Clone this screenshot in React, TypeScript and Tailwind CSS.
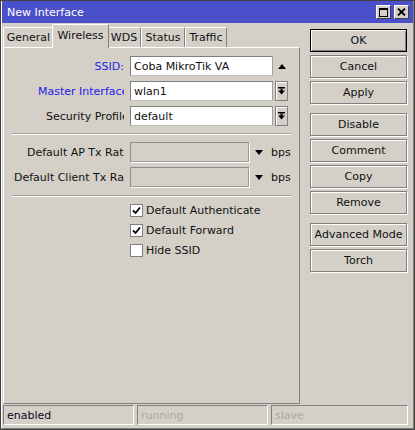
import React from "react";

const Btn = ({ label, def = false }: { label: string; def?: boolean }) => (
  <div
    className={
      "h-[23px] flex items-center justify-center text-[#101010] " +
      (def
        ? "border border-black shadow-[inset_1px_1px_0_#ffffff,inset_-1px_-1px_0_#808080]"
        : "border border-[#808080] shadow-[inset_1px_1px_0_#ffffff,1px_1px_0_#ffffff]")
    }
  >
    {label}
  </div>
);

const UpTri = () => (
  <svg width="8" height="5" viewBox="0 0 8 5">
    <polygon points="0,5 8,5 4,0" fill="#000" />
  </svg>
);

const DownTri = () => (
  <svg width="8" height="5" viewBox="0 0 8 5">
    <polygon points="0,0 8,0 4,5" fill="#000" />
  </svg>
);

const DropBtn = () => (
  <div className="ml-[2px] w-[13px] h-[20px] flex items-center justify-center border border-[#808080] shadow-[inset_1px_1px_0_#ffffff]">
    <svg width="7" height="8" viewBox="0 0 7 8">
      <rect x="0" y="0" width="7" height="1.5" fill="#000" />
      <rect x="2.5" y="1.5" width="2" height="2.5" fill="#000" />
      <polygon points="0,3.5 7,3.5 3.5,7.5" fill="#000" />
    </svg>
  </div>
);

const Label = ({ text, pl, blue = false, right = false }: { text: string; pl?: string; blue?: boolean; right?: boolean }) => (
  <div
    className={
      "w-[120px] overflow-hidden whitespace-nowrap " +
      (right ? "text-right " : "text-left ") +
      (pl ?? "") +
      (blue ? " text-[#2323e6]" : " text-[#101010]")
    }
  >
    {text}
  </div>
);

const Input = ({ value }: { value: string }) => (
  <div className="ml-[6px] w-[143px] h-[20px] bg-white border border-t-[#808080] border-l-[#808080] border-r-[#a0a0a0] border-b-[#c0c0c0] flex items-center pl-[3px] text-[#101010]">
    {value}
  </div>
);

const Sep = ({ mt }: { mt: string }) => (
  <div className={"mx-[8px] " + mt}>
    <div className="h-px bg-[#a0a0a0]" />
    <div className="h-px bg-white" />
  </div>
);

const Check = ({ label, checked }: { label: string; checked: boolean }) => (
  <div className="h-[20px] flex items-center ml-[126px]">
    <div className="w-[13px] h-[13px] bg-white border border-[#808080] flex items-center justify-center">
      {checked && (
        <svg width="9" height="9" viewBox="0 0 9 9">
          <polyline points="1,4.5 3.5,7 8,1.5" fill="none" stroke="#000" strokeWidth="1.8" />
        </svg>
      )}
    </div>
    <span className="ml-[3px] text-[#101010]">{label}</span>
  </div>
);

export default function App() {
  const tabs = [
    { name: "General", w: "w-[51px]" },
    { name: "Wireless", w: "w-[57px]", sel: true },
    { name: "WDS", w: "w-[34px]" },
    { name: "Status", w: "w-[44px]" },
    { name: "Traffic", w: "w-[42px]" },
  ];
  return (
    <div className="w-[415px] h-[430px] bg-[#d4d0c8] border border-[#404040] font-['DejaVu_Sans',sans-serif] text-[11px] leading-none overflow-hidden">
      <div className="w-full h-full flex flex-col border border-t-white border-l-white border-r-[#808080] border-b-[#808080]">
        {/* Title bar */}
        <div className="h-[22px] -mt-px bg-[#4a4fca] flex items-center justify-between pl-[5px] pr-[4px]">
          <span className="text-white">New Interface</span>
          <div className="flex gap-[3px]">
            <div className="w-[15px] h-[14px] bg-[#d4d0c8] border border-t-white border-l-white border-r-[#404040] border-b-[#404040] flex items-center justify-center">
              <svg width="9" height="9" viewBox="0 0 9 9">
                <rect x="0.5" y="0.5" width="8" height="8" fill="none" stroke="#000" strokeWidth="1" />
                <rect x="0" y="0" width="9" height="2" fill="#000" />
              </svg>
            </div>
            <div className="w-[15px] h-[14px] bg-[#d4d0c8] border border-t-white border-l-white border-r-[#404040] border-b-[#404040] flex items-center justify-center">
              <svg width="9" height="8" viewBox="0 0 9 8">
                <path d="M1 0.5 L8 7.5 M8 0.5 L1 7.5" stroke="#000" strokeWidth="1.8" />
              </svg>
            </div>
          </div>
        </div>

        {/* Main */}
        <div className="h-[381px] flex">
          <div className="ml-[1px] w-[297px] flex flex-col">
            <div className="h-[24px] flex items-end">
              {tabs.map((t) =>
                t.sel ? (
                  <div
                    key={t.name}
                    className={t.w + " -mx-[2px] h-[24px] -mb-px relative z-10 bg-[#d4d0c8] border-l border-t border-white border-r border-r-[#808080] rounded-t-[2px] flex items-center justify-center text-[#101010] pb-[2px]"}
                  >
                    {t.name}
                  </div>
                ) : (
                  <div
                    key={t.name}
                    className={t.w + " h-[20px] overflow-hidden whitespace-nowrap bg-[#d4d0c8] border-l border-t border-white border-r border-r-[#808080] rounded-t-[2px] flex items-center justify-center text-[#101010]"}
                  >
                    {t.name}
                  </div>
                )
              )}
            </div>
            <div className="flex-1 border border-t-white border-l-white border-r-[#808080] border-b-[#808080] flex flex-col pt-[8px]">
              <div className="h-[20px] flex items-center">
                <Label text="SSID:" right blue />
                <Input value="Coba MikroTik VA" />
                <div className="w-[18px] flex justify-center">
                  <UpTri />
                </div>
              </div>
              <div className="h-[20px] mt-[5px] flex items-center">
                <Label text="Master Interface" pl="pl-[34px]" blue />
                <Input value="wlan1" />
                <DropBtn />
              </div>
              <div className="h-[20px] mt-[5px] flex items-center">
                <Label text="Security Profile" pl="pl-[42px]" />
                <Input value="default" />
                <DropBtn />
              </div>
              <Sep mt="mt-[7px]" />
              <div className="h-[20px] mt-[7px] flex items-center">
                <Label text="Default AP Tx Rate" pl="pl-[23px]" />
                <div className="ml-[6px] w-[119px] h-[20px] border border-t-[#8c8c8c] border-l-[#8c8c8c] border-r-[#9c9c9c] border-b-[#9c9c9c] shadow-[1px_1px_0_#ffffff]" />
                <div className="ml-[6px] flex items-center">
                  <DownTri />
                </div>
                <span className="ml-[8px] text-[#101010]">bps</span>
              </div>
              <div className="h-[20px] mt-[5px] flex items-center">
                <Label text="Default Client Tx Rate" pl="pl-[10px]" />
                <div className="ml-[6px] w-[119px] h-[20px] border border-t-[#8c8c8c] border-l-[#8c8c8c] border-r-[#9c9c9c] border-b-[#9c9c9c] shadow-[1px_1px_0_#ffffff]" />
                <div className="ml-[6px] flex items-center">
                  <DownTri />
                </div>
                <span className="ml-[8px] text-[#101010]">bps</span>
              </div>
              <Sep mt="mt-[8px]" />
              <div className="mt-[3px] flex flex-col">
                <Check label="Default Authenticate" checked />
                <Check label="Default Forward" checked />
                <Check label="Hide SSID" checked={false} />
              </div>
            </div>
          </div>

          <div className="ml-[10px] w-[97px] flex flex-col pt-[6px]">
            <Btn label="OK" def />
            <div className="mt-[3px]"><Btn label="Cancel" /></div>
            <div className="mt-[3px]"><Btn label="Apply" /></div>
            <div className="mt-[9px]"><Btn label="Disable" /></div>
            <div className="mt-[3px]"><Btn label="Comment" /></div>
            <div className="mt-[3px]"><Btn label="Copy" /></div>
            <div className="mt-[3px]"><Btn label="Remove" /></div>
            <div className="mt-[9px]"><Btn label="Advanced Mode" /></div>
            <div className="mt-[3px]"><Btn label="Torch" /></div>
          </div>
        </div>

        {/* Status bar */}
        <div className="mt-[1px] h-[20px] flex gap-[3px] pl-[1px]">
          <div className="w-[131px] h-full border border-t-[#808080] border-l-[#808080] border-r-white border-b-white flex items-center pl-[3px] text-[#0a0a20]">
            enabled
          </div>
          <div className="w-[131px] h-full border border-t-[#808080] border-l-[#808080] border-r-white border-b-white flex items-center pl-[3px] text-[#a8a8a8]">
            running
          </div>
          <div className="w-[137px] h-full border border-t-[#808080] border-l-[#808080] border-r-white border-b-white flex items-center pl-[3px] text-[#a8a8a8]">
            slave
          </div>
        </div>
      </div>
    </div>
  );
}
